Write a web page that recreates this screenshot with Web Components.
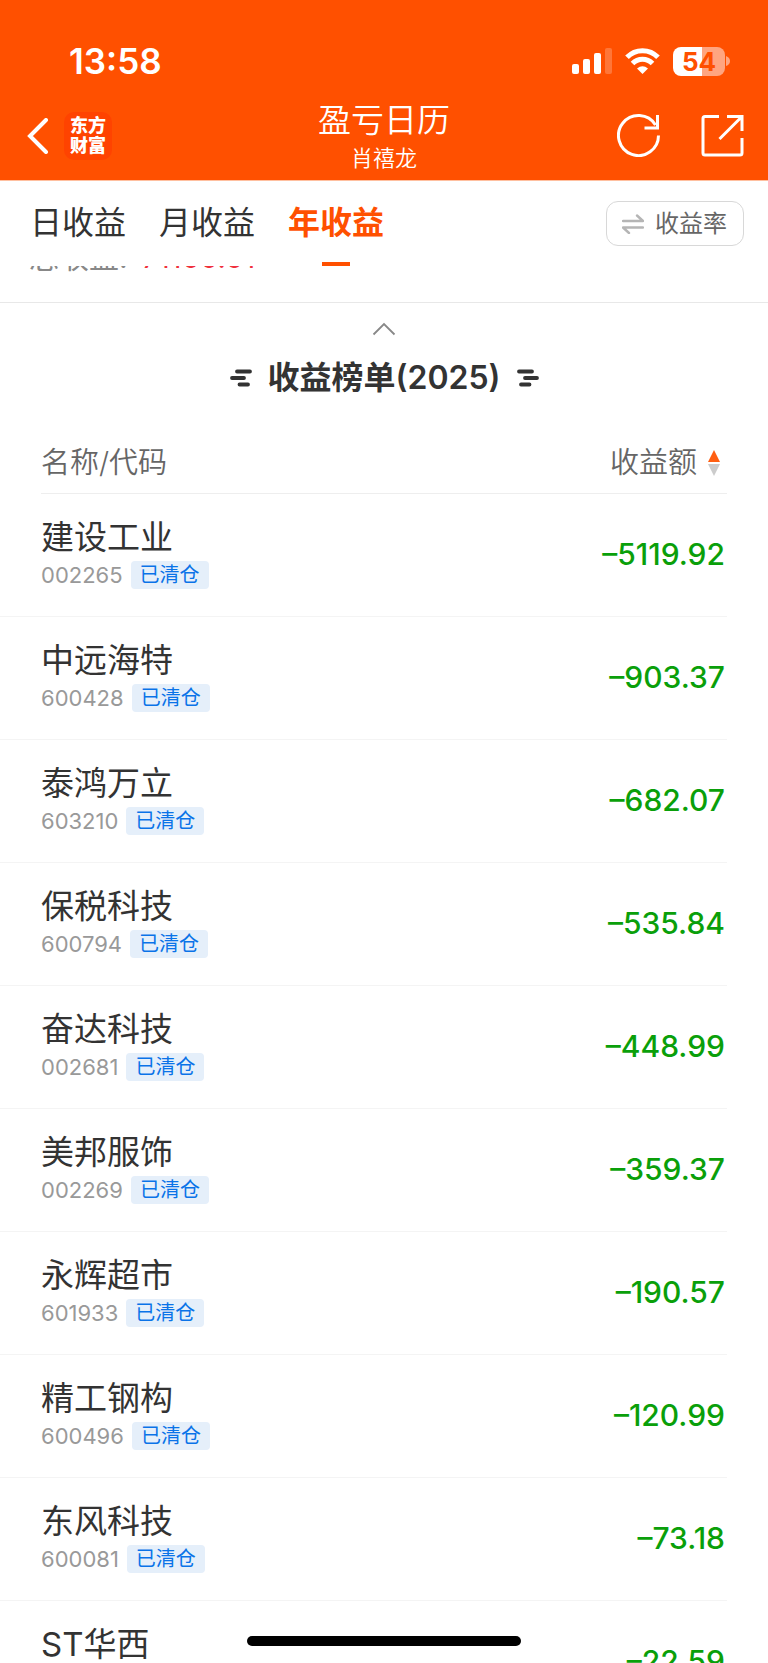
<!DOCTYPE html>
<html lang="zh-CN">
<head>
<meta charset="utf-8">
<meta name="viewport" content="width=device-width, initial-scale=1">
<title>盈亏日历</title>
<style>
  html, body { margin: 0; height: 100%; }
  body {
    font-family: Inter, "Noto Sans CJK SC", sans-serif;
    color: #333;
    background: #fff;
    overflow: hidden;
  }
</style>
</head>
<body>
<profit-app></profit-app>

<script>
const RESET = `
  * { box-sizing: border-box; }
  button { font: inherit; color: inherit; background: none; border: 0; margin: 0; padding: 0; cursor: pointer; }
  a { color: inherit; text-decoration: none; }
  svg { display: block; }
`;

function define(name, html, setup) {
  const tpl = document.createElement('template');
  tpl.innerHTML = html;
  customElements.define(name, class extends HTMLElement {
    constructor() {
      super();
      this.attachShadow({ mode: 'open' }).append(tpl.content.cloneNode(true));
    }
    connectedCallback() {
      if (setup) setup(this, this.shadowRoot);
    }
  });
}

define('status-bar', `
  <style>${RESET}
    :host { display: flex; align-items: center; justify-content: space-between; height: 92px; padding: 30px 38px 0 69px; }
    time { font-size: 35px; font-weight: 600; line-height: 40px; }
    .signals { display: flex; align-items: center; gap: 13px; }
    .battery { display: flex; align-items: center; gap: 1px; }
    .level {
      width: 52px; height: 29px; border-radius: 8px;
      background: linear-gradient(90deg, #fff 55%, #ffa580 55%);
      color: #ff5000; font-size: 26px; font-weight: 700; line-height: 29px; text-align: center;
    }
  </style>
  <time>13:58</time>
  <div class="signals">
    <svg width="40" height="26" viewBox="0 0 40 26" fill="#fff" aria-hidden="true">
      <rect x="0" y="16" width="7" height="10" rx="2"/>
      <rect x="11" y="11" width="7" height="15" rx="2"/>
      <rect x="22" y="5" width="7" height="21" rx="2"/>
      <rect x="33" y="0" width="7" height="26" rx="2" opacity=".22"/>
    </svg>
    <svg width="35" height="26" viewBox="0 0 35 26" aria-hidden="true">
      <g fill="none" stroke="#fff" stroke-width="5">
        <path d="M2 9.3C10.500 .4 24.500 .4 33 9.300"/>
        <path d="M7.500 15.500C13 9.800 22 9.800 27.500 15.500"/>
      </g>
      <path d="M12 20.500Q17.500 15.800 23 20.500L17.500 26Z" fill="#fff"/>
    </svg>
    <div class="battery">
      <div class="level">54</div>
      <svg width="4" height="10" viewBox="0 0 4 10" aria-hidden="true"><path d="M0 0Q4 1.500 4 5T0 10Z" fill="#ffa580"/></svg>
    </div>
  </div>
`);

define('nav-bar', `
  <style>${RESET}
    :host { display: grid; grid-template-columns: 1fr auto 1fr; align-items: center; height: 88px; padding: 0 24px; }
    .left { display: flex; align-items: center; gap: 15px; }
    .right { display: flex; align-items: center; justify-content: flex-end; gap: 41px; padding-bottom: 2px; }
    .logo {
      width: 48px; height: 48px; padding: 4px 0; border-radius: 10px; background: #ff4300;
      font-size: 18px; font-weight: 900; line-height: 20px; text-align: center;
    }
    .logo span { display: block; }
    .title { padding-top: 3px; text-align: center; }
    h1, p { margin: 0; font-weight: 350; }
    h1 { font-size: 33px; line-height: 40px; }
    p { font-size: 22px; line-height: 36px; }
  </style>
  <div class="left">
    <button aria-label="返回"><svg width="25" height="36" viewBox="-2 0 25 36" fill="none" stroke="#fff" stroke-width="4"><path d="M20 2 4 18 20 34" stroke-linecap="round"/></svg></button>
    <a href="#" class="logo"><span>东方</span><span>财富</span></a>
  </div>
  <div class="title"><h1><slot></slot></h1><p><slot name="owner"></slot></p></div>
  <div class="right">
    <button aria-label="刷新"><svg width="43" height="43" viewBox="0 0 43 43" fill="none" stroke="#fff" stroke-width="3"><path d="M41.500 21.500A20 20 0 1 1 38.500 11"/><path d="M27.500 14H40.500V1"/></svg></button>
    <button aria-label="分享"><svg width="43" height="43" viewBox="0 0 43 43" fill="none" stroke="#fff" stroke-width="3"><path d="M18 2.500H4Q2 2.500 2 4.500V39Q2 41 4 41H39Q41 41 41 39V24"/><path d="M26 2.500H41V17M41 2.500 18.500 25"/></svg></button>
  </div>
`);

define('period-tabs', `
  <style>${RESET}
    :host { display: flex; align-items: flex-start; justify-content: space-between; height: 85px; padding: 0 24px 0 30px; background: #fff; }
    nav { display: flex; gap: 33px; }
    nav a { display: flex; flex-direction: column; align-items: center; justify-content: space-between; height: 85px; padding-top: 18px; font-size: 32px; line-height: 48px; }
    nav a.active { color: #ff5000; font-weight: 700; }
    nav a.active::after { content: ""; width: 28px; height: 4px; background: #ff5000; }
    .switch {
      display: flex; align-items: center; gap: 11px; height: 45px; margin-top: 20px; padding: 0 16px 0 15px;
      border: 1px solid #d8d8d8; border-radius: 12px; color: #666; font-size: 24px; line-height: 36px;
    }
  </style>
  <nav>
    <a href="#">日收益</a>
    <a href="#">月收益</a>
    <a href="#" class="active" aria-current="page">年收益</a>
  </nav>
  <button class="switch">
    <svg width="22" height="20" viewBox="0 0 22 20" fill="none" stroke="#b5b5b5" stroke-width="2.400" stroke-linecap="round" stroke-linejoin="round"><path d="M1 7H21L15 1.500"/><path d="M21 13.500H1L7 19"/></svg>
    收益率
  </button>
`);

define('total-summary', `
  <style>${RESET}
    :host { display: block; overflow: hidden; height: 37px; border-bottom: 1px solid #e8e8e8; }
    p { display: flex; align-items: baseline; gap: 14px; margin: -29px 0 0; padding-left: 29px; font-size: 30px; line-height: 40px; color: #888; }
    strong { font-size: 29px; font-weight: 400; color: #f0303c; }
  </style>
  <p><span>总收益:</span><strong><slot></slot></strong></p>
`);

define('rank-heading', `
  <style>${RESET}
    :host { display: flex; flex-direction: column; align-items: center; gap: 18px; padding-top: 19px; }
    h2 { display: flex; align-items: center; gap: 16px; margin: 0; font-size: 32px; font-weight: 600; line-height: 48px; }
  </style>
  <button aria-label="收起"><svg width="24" height="14" viewBox="0 0 24 14" fill="none" stroke="#888" stroke-width="1.800"><path d="M1.500 12.500 12 2 22.500 12.500"/></svg></button>
  <h2>
    <svg width="22" height="18" viewBox="0 0 22 18" stroke="#333" stroke-width="3.800" stroke-linecap="round"><path d="M7 2.500H20M2 9H14M9.500 15.500H18"/></svg>
    <slot></slot>
    <svg width="22" height="18" viewBox="0 0 22 18" stroke="#333" stroke-width="3.800" stroke-linecap="round"><path d="M2 2.500H15M8 9H20M4 15.500H12.500"/></svg>
  </h2>
`);

define('state-tag', `
  <style>${RESET}
    :host { display: block; padding: 0 9px; border-radius: 4px; background: #e5effa; color: #0a73e8; font-size: 20px; line-height: 28px; }
  </style>
  <slot></slot>
`);

const HOLDINGS = [
  ['建设工业', '002265', '–5119.92'],
  ['中远海特', '600428', '–903.37'],
  ['泰鸿万立', '603210', '–682.07'],
  ['保税科技', '600794', '–535.84'],
  ['奋达科技', '002681', '–448.99'],
  ['美邦服饰', '002269', '–359.37'],
  ['永辉超市', '601933', '–190.57'],
  ['精工钢构', '600496', '–120.99'],
  ['东风科技', '600081', '–73.18'],
  ['ST华西', '', '–22.59'],
];

define('rank-table', `
  <style>${RESET}
    :host { display: block; padding: 30px 41px 0 0; }
    table { width: 100%; border-collapse: separate; border-spacing: 0; }
    th, td { padding: 0; text-align: left; font-weight: 400; }
    th { color: #666; font-size: 29px; font-weight: 350; line-height: 40px; }
    th:first-child { padding-left: 41px; }
    th > div { height: 62px; padding-top: 11px; border-bottom: 1px solid #eee; }
    th:last-child > div { display: flex; justify-content: flex-end; }
    .sort { display: flex; align-items: center; gap: 11px; height: 40px; padding-right: 7px; line-height: 40px; }
    td { height: 123px; border-bottom: 1px solid #f4f4f4; }
    td:first-child { padding-left: 41px; }
    td:last-child { padding: 0 2px 3px 0; text-align: right; color: #0a9f0a; font-size: 30px; font-weight: 500; line-height: 40px; }
    .name { font-size: 33px; line-height: 40px; }
    .code { display: flex; align-items: center; gap: 8px; height: 36px; color: #999; font-size: 22px; line-height: 36px; }
  </style>
  <table>
    <thead><tr>
      <th scope="col"><div>名称/代码</div></th>
      <th scope="col"><div><button class="sort">收益额
        <svg width="12" height="26" viewBox="0 0 12 26"><path d="M6 0 12 12H0Z" fill="#ff5f12"/><path d="M0 14H12L6 26Z" fill="#ccc"/></svg>
      </button></div></th>
    </tr></thead>
    <tbody></tbody>
  </table>
`, (host, root) => {
  root.querySelector('tbody').innerHTML = HOLDINGS.map(([name, code, amount]) => `
    <tr>
      <td><div class="name">${name}</div><div class="code">${code ? `<span>${code}</span><state-tag>已清仓</state-tag>` : ''}</div></td>
      <td>${amount}</td>
    </tr>`).join('');
});

define('profit-app', `
  <style>${RESET}
    :host { position: relative; display: flex; flex-direction: column; height: 100vh; overflow: hidden; background: #fff; }
    header { flex: none; background: #ff5000; color: #fff; border-bottom: 1px solid #ffc0a0; }
    period-tabs { flex: none; }
    main { flex: 1; min-height: 0; overflow: hidden; }
    .home { position: absolute; bottom: 17px; left: 50%; width: 274px; height: 10px; margin-left: -137px; border-radius: 5px; background: #000; }
  </style>
  <header>
    <status-bar></status-bar>
    <nav-bar>盈亏日历<span slot="owner">肖禧龙</span></nav-bar>
  </header>
  <period-tabs></period-tabs>
  <main>
    <total-summary>71100.01</total-summary>
    <rank-heading>收益榜单(2025)</rank-heading>
    <rank-table></rank-table>
  </main>
  <div class="home"></div>
`);
</script>
</body>
</html>
